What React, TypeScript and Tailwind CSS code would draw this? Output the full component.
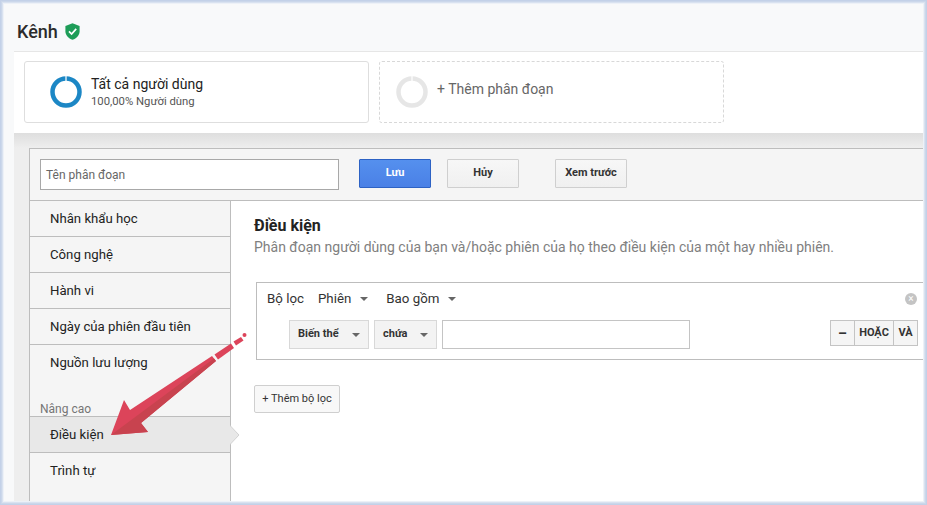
import React from "react";

const Caret = ({ className = "" }: { className?: string }) => (
  <span className={`inline-block h-0 w-0 border-x-[4px] border-t-[4px] border-x-transparent border-t-[#666] ${className}`} />
);

const GreyBtn = ({ children, className = "" }: { children: React.ReactNode; className?: string }) => (
  <div className={`flex h-[29px] items-center justify-center rounded-[1px] border border-[#cfcfcf] bg-gradient-to-b from-[#f7f7f7] to-[#f0f0f0] text-[11px] font-bold text-[#333] ${className}`}>
    {children}
  </div>
);

const NavRow = ({ label, last = false }: { label: string; last?: boolean }) => (
  <div className={`flex h-[36px] items-center pl-[20px] text-[13.2px] text-[#222] ${last ? "" : "border-b border-[#bdbdbd]"}`}>{label}</div>
);

export default function App() {
  return (
    <div className="relative h-[505px] w-[927px] overflow-hidden bg-[#f8f9fa] font-['Roboto',sans-serif]">
      <div className="flex h-full flex-col">
        <header className="flex h-[51px] shrink-0 items-center gap-[7px] pl-[17px] pt-[12px]">
          <span className="text-[18px] font-medium leading-none text-[#2c2c2c]">Kênh</span>
          <svg width="15" height="17" viewBox="0 0 15 17">
            <path d="M7.5 0.3 14.6 2.9V8.2C14.6 12.2 11.6 15.4 7.5 16.8 3.4 15.4 0.4 12.2 0.4 8.2V2.9Z" fill="#1e9d58" />
            <path d="M4 8.4 6.6 11 11.2 5.9" fill="none" stroke="#fff" strokeWidth="1.7" />
          </svg>
        </header>

        <main className="ml-[14px] flex min-h-0 flex-1 flex-col border-t border-[#e6e6e6] bg-white">
          <section className="flex h-[81px] shrink-0 gap-[10px] pl-[10px] pt-[9px]">
            <div className="flex h-[62px] w-[345px] items-center rounded-[3px] border border-[#dedede] pl-[25px]">
              <svg width="32" height="32" viewBox="0 0 32 32">
                <circle cx="16" cy="16" r="13.5" fill="none" stroke="#1c87c5" strokeWidth="4.5" />
                <rect x="15.4" y="0" width="1.2" height="5" fill="#fff" />
              </svg>
              <div className="ml-[9px] flex flex-col pt-[1px]">
                <span className="text-[14px] leading-[17px] text-[#222]">Tất cả người dùng</span>
                <span className="mt-[1px] text-[11.3px] leading-[16px] text-[#555]">100,00% Người dùng</span>
              </div>
            </div>
            <div className="flex h-[62px] w-[345px] items-center rounded-[3px] border border-dashed border-[#d8d8d8] pl-[16px]">
              <svg width="32" height="32" viewBox="0 0 32 32">
                <circle cx="16" cy="16" r="13.5" fill="none" stroke="#e6e6e6" strokeWidth="4.5" />
                <rect x="15.4" y="0" width="1.2" height="5" fill="#fff" />
              </svg>
              <span className="mb-[5px] ml-[9px] text-[14px] text-[#666]">+ Thêm phân đoạn</span>
            </div>
          </section>

          <section className="min-h-0 flex-1 bg-gradient-to-b from-[#dedede] to-[#eeeeee] bg-[length:100%_15px] bg-no-repeat pl-[15px] pt-[15px] [background-color:#eeeeee]">
            <div className="flex h-full flex-col border-l border-t border-[#bdbdbd] bg-white">
              <div className="flex h-[52px] shrink-0 items-start border-b border-[#bdbdbd] bg-[#f5f5f5] pl-[10px] pt-[10px]">
                <div className="flex h-[31px] w-[299px] items-center border border-[#a8a8a8] bg-white pl-[5px] text-[12px] text-[#666]">Tên phân đoạn</div>
                <div className="ml-[20px] flex h-[29px] w-[72px] items-center justify-center rounded-[1px] border border-[#2d62c4] bg-gradient-to-b from-[#5590ee] to-[#4a80e6] text-[11px] font-bold text-white">Lưu</div>
                <GreyBtn className="ml-[16px] w-[72px]">Hủy</GreyBtn>
                <GreyBtn className="ml-[36px] w-[72px]">Xem trước</GreyBtn>
              </div>

              <div className="flex min-h-0 flex-1">
                <nav className="relative w-[201px] shrink-0 border-r border-[#bdbdbd] bg-[#f5f5f5]">
                  <NavRow label="Nhân khẩu học" />
                  <NavRow label="Công nghệ" />
                  <NavRow label="Hành vi" />
                  <NavRow label="Ngày của phiên đầu tiên" />
                  <NavRow label="Nguồn lưu lượng" last />
                  <div className="h-[35px] pl-[10px] pt-[21px] text-[12px] leading-[14px] text-[#757575]">Nâng cao</div>
                  <div className="relative flex h-[37px] items-center border-y border-[#bdbdbd] bg-[#e8e8e8] pl-[20px] text-[13.2px] text-[#222]">
                    Điều kiện
                    <svg className="absolute -right-[10px] top-[8px]" width="10" height="20" viewBox="0 0 10 20">
                      <path d="M0 0.5 9 10 0 19.5Z" fill="#e8e8e8" />
                      <path d="M0 0.5 9 10 0 19.5" fill="none" stroke="#d2d2d2" />
                    </svg>
                  </div>
                  <NavRow label="Trình tự" last />
                </nav>

                <div className="min-w-0 flex-1 pl-[23px] pt-[15px]">
                  <h2 className="text-[16px] font-bold leading-[20px] text-[#222]">Điều kiện</h2>
                  <p className="mt-[1px] whitespace-nowrap text-[14px] leading-[20px] text-[#808080]">Phân đoạn người dùng của bạn và/hoặc phiên của họ theo điều kiện của một hay nhiều phiên.</p>

                  <div className="relative ml-[2px] mt-[25px] h-[78px] border-y border-l border-[#bdbdbd] pl-[10px]">
                    <div className="flex h-[32px] items-center text-[13.3px] text-[#333]">
                      <span>Bộ lọc</span>
                      <span className="ml-[14px]">Phiên</span>
                      <Caret className="ml-[9px]" />
                      <span className="ml-[18px]">Bao gồm</span>
                      <Caret className="ml-[9px]" />
                    </div>
                    <span className="absolute right-[10px] top-[10px] flex h-[12px] w-[12px] items-center justify-center rounded-full bg-[#c4c4c4] text-[10px] leading-none text-white">×</span>
                    <div className="ml-[22px] mt-[5px] flex">
                      <div className="flex h-[29px] w-[80px] items-center justify-between border border-[#d8d8d8] bg-[#f3f3f3] pl-[8px] pr-[8px] text-[11px] font-bold text-[#333]">Biến thể<Caret /></div>
                      <div className="ml-[5px] flex h-[29px] w-[63px] items-center justify-between border border-[#d8d8d8] bg-[#f3f3f3] pl-[8px] pr-[8px] text-[11px] font-bold text-[#333]">chứa<Caret /></div>
                      <div className="ml-[5px] h-[29px] w-[248px] border border-[#c4c4c4] bg-white" />
                      <div className="ml-[140px] flex h-[26px] border border-[#c4c4c4] bg-[#f5f5f5] text-[11px] font-bold text-[#333]">
                        <div className="flex w-[24px] items-center justify-center border-r border-[#c4c4c4] text-[14px]">–</div>
                        <div className="flex w-[39px] items-center justify-center border-r border-[#c4c4c4]">HOẶC</div>
                        <div className="flex w-[23px] items-center justify-center">VÀ</div>
                      </div>
                    </div>
                  </div>

                  <div className="mt-[25px] flex h-[28px] w-[86px] items-center justify-center rounded-[2px] border border-[#cfcfcf] bg-[#f8f8f8] text-[11px] text-[#333]">+ Thêm bộ lọc</div>
                </div>
              </div>
            </div>
          </section>
        </main>
      </div>

      <svg className="absolute left-[105px] top-[330px]" width="145" height="110" viewBox="105 330 145 110">
        <path d="M111 435 124 400 130 410 212 356 216 361 141 423 148 432Z" fill="#dc445a" />
        <path d="M111 435 214 358.5 216 361 141 423 148 432Z" fill="#c8434f" />
        <path d="M214.5 354.5 231 343.5 234 348 218 359.5Z" fill="#dc445a" />
        <path d="M233.5 341.5 241 337 243.5 340.5 236 345.5Z" fill="#dc445a" />
        <circle cx="244.5" cy="335" r="2" fill="#dc445a" />
      </svg>

      <div className="pointer-events-none absolute inset-0 shadow-[inset_0_0_0_1px_#c3d1e8,inset_0_0_0_2px_#cbd7ea,inset_0_0_0_3px_#d9e2f0,inset_0_0_0_4px_#edf1f7]" />
    </div>
  );
}
